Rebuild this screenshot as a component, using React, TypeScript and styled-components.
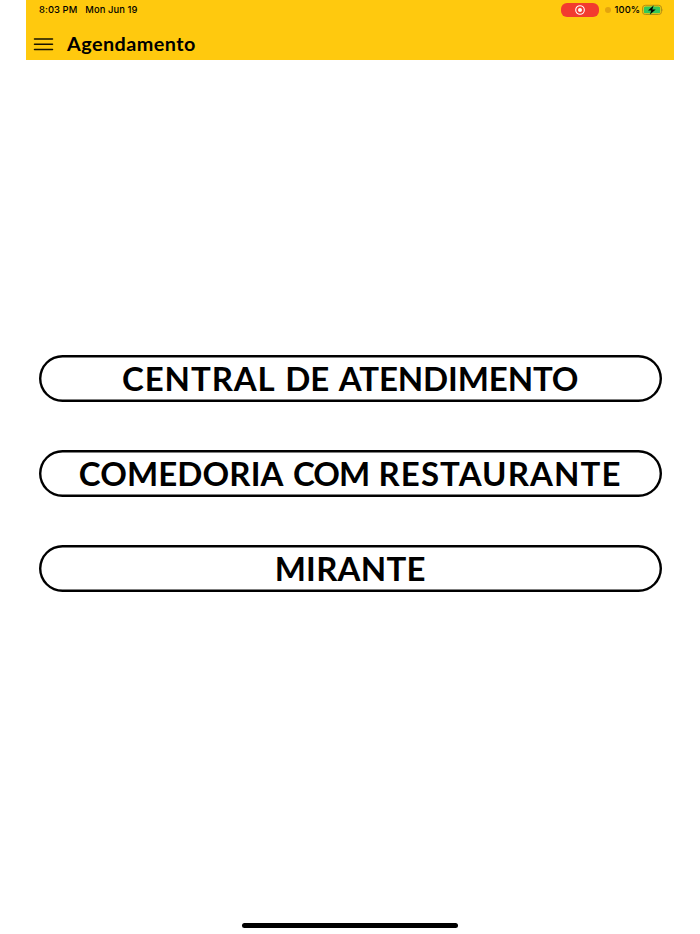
import React from 'react';
import styled, { createGlobalStyle } from 'styled-components';

const GlobalStyle = createGlobalStyle`
  *, *::before, *::after { box-sizing: border-box; }
  body { margin: 0; background: #fff; }
`;

const Screen = styled.div`
  display: flex;
  flex-direction: column;
  width: 648.4px;
  height: 934px;
  margin-left: 26px;
  color: #000;
  background: #fff;
  overflow: hidden;
`;

const Header = styled.header`
  flex: none;
  height: 60.4px;
  background: #ffc90e;
`;

const StatusBar = styled.div`
  display: flex;
  align-items: center;
  height: 20px;
  padding: 0 10px 0 13px;
  font: 500 9.4px/20px Inter, sans-serif;
  letter-spacing: 0.08px;
  white-space: nowrap;
`;

const StatusDate = styled.span`
  margin-left: 8px;
`;

const RecordingPill = styled.div`
  display: flex;
  align-items: center;
  justify-content: center;
  width: 38px;
  height: 14px;
  margin-left: auto;
  border-radius: 6px;
  background: #f23b2f;
`;

const PrivacyDot = styled.div`
  width: 6px;
  height: 6px;
  margin: 0 3.4px 0 5.6px;
  border-radius: 50%;
  background: #e4a40e;
`;

const BatteryLevel = styled.span`
  width: 28px;
  letter-spacing: 0.15px;
`;

const TitleBar = styled.div`
  display: flex;
  align-items: center;
  height: 40px;
  padding-left: 7px;
`;

const MenuButton = styled.button`
  display: flex;
  width: 21px;
  height: 20px;
  padding: 0;
  margin-top: 8px;
  border: 0;
  background: none;
`;

const Title = styled.h1`
  margin: 5px 0 0 13px;
  font: 700 19.8px/24px Lato, sans-serif;
  letter-spacing: 0.46px;
`;

const Options = styled.main`
  display: flex;
  flex: 1;
  flex-direction: column;
  gap: 47.4px;
  padding: 294.2px 12.5px 0;
`;

const OptionButton = styled.button`
  flex: none;
  height: 47.6px;
  padding: 0;
  border: 0;
  border-radius: 24px;
  box-shadow: inset 0 0 0 2.4px #000;
  background: #fff;
  color: #000;
  font: 700 33px/40px Lato, sans-serif;
  word-spacing: 1.5px;
  white-space: nowrap;
`;

const Word = styled.span<{ $tracking: number }>`
  letter-spacing: ${(p) => p.$tracking}px;
`;

const HomeIndicator = styled.div`
  flex: none;
  align-self: center;
  width: 216px;
  height: 4.6px;
  margin-bottom: 6.2px;
  border-radius: 3px;
  background: #000;
`;

type OptionWord = { text: string; tracking: number };

const options: OptionWord[][] = [
  [
    { text: 'CENTRAL', tracking: 0.9 },
    { text: 'DE', tracking: 0 },
    { text: 'ATENDIMENTO', tracking: -0.12 },
  ],
  [
    { text: 'COMEDORIA', tracking: 0.1 },
    { text: 'COM', tracking: -1.1 },
    { text: 'RESTAURANTE', tracking: 1.1 },
  ],
  [{ text: 'MIRANTE', tracking: 0.25 }],
];

const RecordIcon = () => (
  <svg width="10" height="10" viewBox="0 0 10 10">
    <circle cx="5" cy="5" r="4.3" fill="none" stroke="#fff" strokeWidth="1.1" />
    <circle cx="5" cy="5" r="2" fill="#fff" />
  </svg>
);

const BatteryIcon = () => (
  <svg width="22" height="12" viewBox="0 0 22 12">
    <rect x="0.5" y="1.3" width="19" height="9.2" rx="2.8" fill="none" stroke="#b38f13" />
    <rect x="1.8" y="2.5" width="16.4" height="6.8" rx="1.6" fill="#35c759" />
    <path d="M20.5 4.4q1.3 1.5 0 3z" fill="#b38f13" />
    <path d="M11.6 1.4 6 6.4h3.3L7.9 10.5l5.8-5.1h-3.4z" fill="#000" stroke="#35c759" strokeWidth="0.5" paintOrder="stroke" />
  </svg>
);

export default function App() {
  return (
    <>
      <GlobalStyle />
      <Screen>
        <Header>
          <StatusBar>
            <span>8:03 PM</span>
            <StatusDate>Mon Jun 19</StatusDate>
            <RecordingPill><RecordIcon /></RecordingPill>
            <PrivacyDot />
            <BatteryLevel>100%</BatteryLevel>
            <BatteryIcon />
          </StatusBar>
          <TitleBar>
            <MenuButton aria-label="Menu">
              <svg width="21" height="20" viewBox="0 0 21 20">
                <path d="M1.5 5h18M1.5 10.2h18M1.5 15.4h18" stroke="#171300" strokeWidth="1.5" strokeLinecap="round" />
              </svg>
            </MenuButton>
            <Title>Agendamento</Title>
          </TitleBar>
        </Header>
        <Options>
          {options.map((words) => (
            <OptionButton key={words[0].text}>
              {words.map(({ text, tracking }, i) => (
                <React.Fragment key={text}>
                  {i > 0 && ' '}
                  <Word $tracking={tracking}>{text}</Word>
                </React.Fragment>
              ))}
            </OptionButton>
          ))}
        </Options>
        <HomeIndicator />
      </Screen>
    </>
  );
}
